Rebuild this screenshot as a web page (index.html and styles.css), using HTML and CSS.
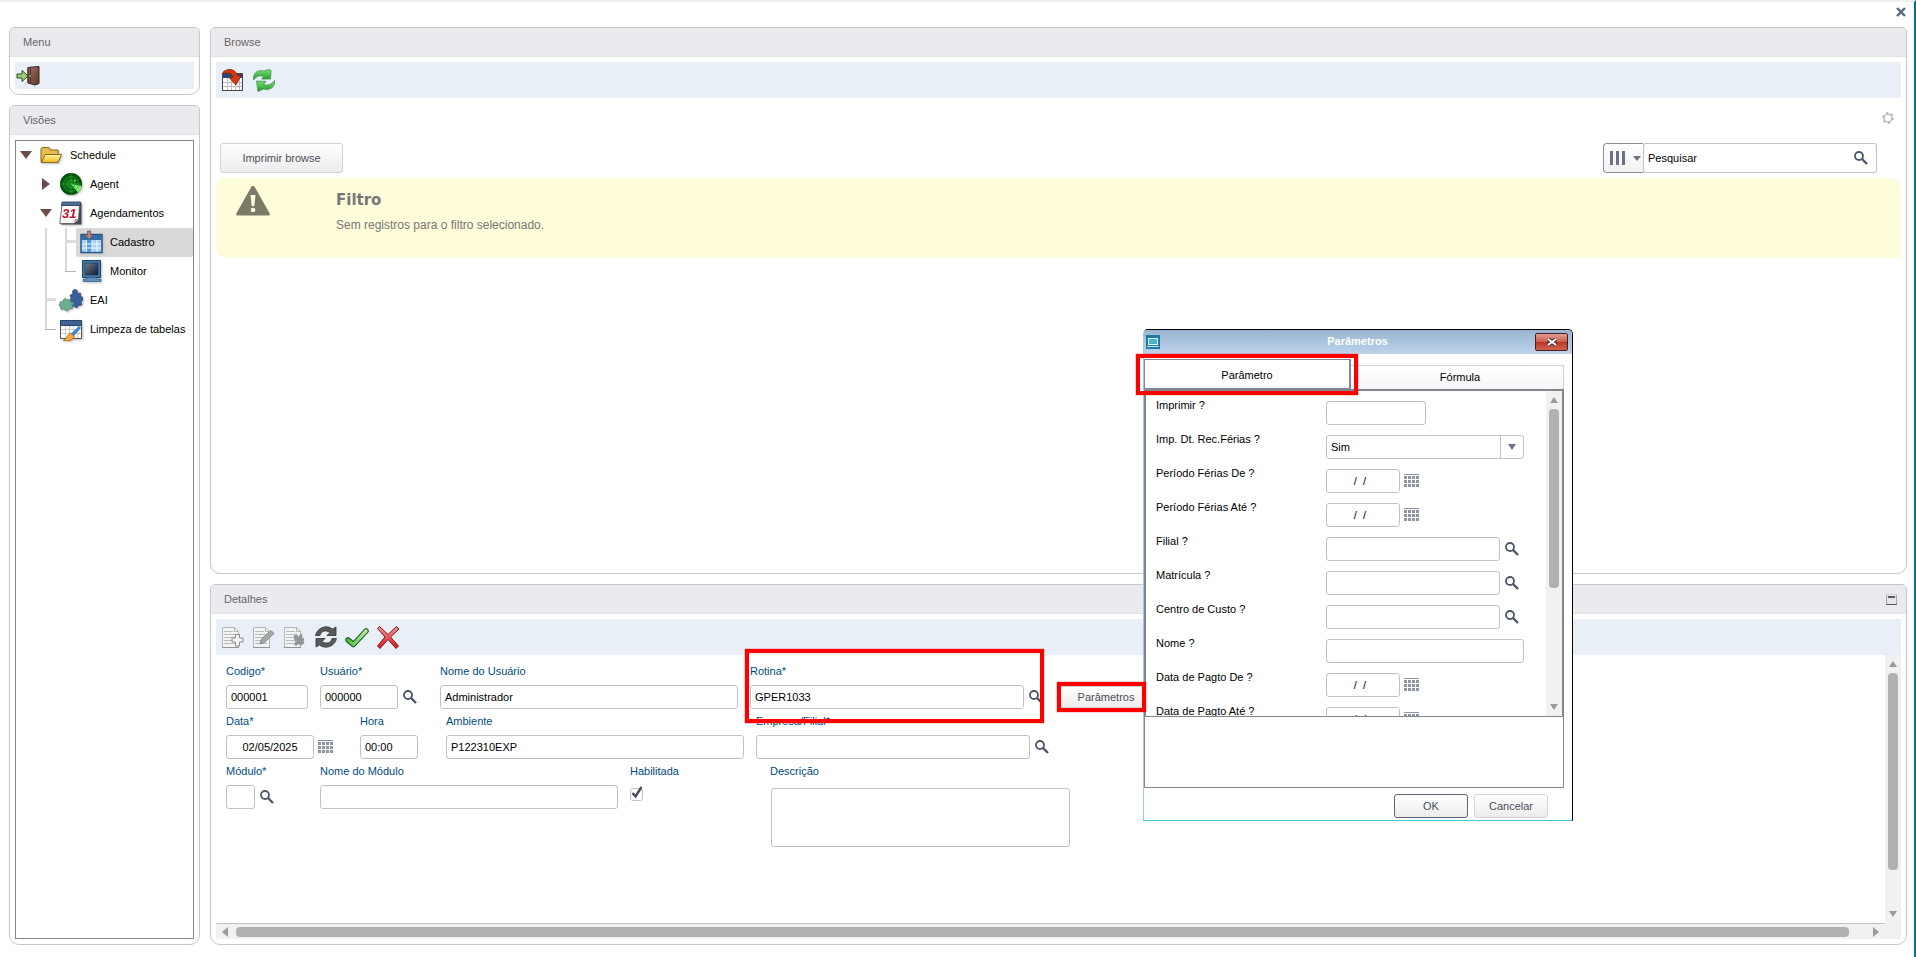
FILE: index.html
```html
<!DOCTYPE html>
<html lang="pt-BR">
<head>
  <meta charset="UTF-8">
  <title>Schedule</title>
  <link rel="stylesheet" href="styles.css">
</head>
<body>

  <!-- Ícones -->
  <svg class="sprite" width="0" height="0" aria-hidden="true">
    <defs>
      <linearGradient id="g-green" x1="0" y1="0" x2="0" y2="1"><stop offset="0" stop-color="#7ee07a"/><stop offset="1" stop-color="#14a01c"/></linearGradient>
      <linearGradient id="g-check" x1="0" y1="0" x2="1" y2="0"><stop offset="0" stop-color="#4cba38"/><stop offset="1" stop-color="#c2eaa4"/></linearGradient>
      <linearGradient id="g-red" x1="0" y1="0" x2="0" y2="1"><stop offset="0" stop-color="#ee9a94"/><stop offset="1" stop-color="#d4161e"/></linearGradient>
      <linearGradient id="g-door" x1="0" y1="0" x2="1" y2="1"><stop offset="0" stop-color="#a3705c"/><stop offset="1" stop-color="#5c382c"/></linearGradient>
      <linearGradient id="g-folder" x1="0" y1="0" x2="0" y2="1"><stop offset="0" stop-color="#fff7a0"/><stop offset="1" stop-color="#ecb91c"/></linearGradient>
      <linearGradient id="g-screen" x1="0" y1="0" x2="1" y2="1"><stop offset="0" stop-color="#6d8294"/><stop offset="1" stop-color="#0c1a2a"/></linearGradient>
      <radialGradient id="g-radar"><stop offset="0" stop-color="#0a8a14"/><stop offset="1" stop-color="#034a08"/></radialGradient>
    </defs>

    <symbol id="i-lens" viewBox="0 0 14 14">
      <circle cx="5" cy="5" r="4" fill="none" stroke="#4c566a" stroke-width="1.8"/>
      <path d="M8 8l5 5" stroke="#4c566a" stroke-width="2.4"/>
    </symbol>
    <symbol id="i-grid" viewBox="0 0 15 14">
      <path fill="#8e95a2" d="M0 0h15v1H0zM0 2h3v3H0zM4 2h3v3H4zM8 2h3v3H8zM12 2h3v3h-3zM0 6h3v3H0zM4 6h3v3H4zM8 6h3v3H8zM12 6h3v3h-3zM0 10h3v3H0zM4 10h3v3H4zM8 10h3v3H8zM12 10h3v3h-3z"/>
    </symbol>
    <symbol id="i-door" viewBox="0 0 24 24">
      <path d="M12 4.500l11-1v17l-4 1.500-7-2z" fill="url(#g-door)" stroke="#33231d"/>
      <path d="M12 4.500v15.500M14.500 4.500v15.500" stroke="#4b3128"/>
      <circle cx="14" cy="13" r="1.300" fill="#d8c8b8" stroke="#33231d" stroke-width=".6"/>
      <path d="M1 11h5V7.500l6 5.500-6 5.500V15H1z" fill="#9ccf7c" stroke="#2c4a20"/>
    </symbol>
    <symbol id="i-import" viewBox="0 0 24 24">
      <path d="M1.500 5.500h20v17h-20z" fill="#fff" stroke="#444"/>
      <path d="M2 6h19v4H2z" fill="#2c4a78"/>
      <path d="M2 14.500h19M2 18.500h19M6.500 10v12M10.500 10v12M14.500 10v12M18.500 10v12" stroke="#bbb"/>
      <path d="M1.500 5.500v17h20v-17" fill="none" stroke="#444"/>
      <path d="M2 4C6 .5 14 0 16.500 7.500h3.500L15 17 8.500 10l3.500-1C10.500 5 7 3.500 2 6z" fill="#d63a10" stroke="#8a1c08" stroke-width=".8"/>
    </symbol>
    <symbol id="i-recycle" viewBox="0 0 24 24">
      <path d="M1.500 12C1 5 5 1.500 12 3l5-1.500 2 1-.5 8.500H9.500L12 8.500C8 7 4.500 8 1.500 12z" fill="url(#g-green)" stroke="#4c8a50" stroke-width=".8"/>
      <path d="M22.500 12.500c.5 7-4.500 10-11 8.500L6 23.500 4.500 13l9.500.5-2.500 3c4 1.500 8 0 11-4z" fill="url(#g-green)" stroke="#4c8a50" stroke-width=".8"/>
    </symbol>
    <symbol id="i-folder" viewBox="0 0 24 24">
      <path d="M2 19V6l1-1.500h7L11.500 7H19v12z" fill="#e6bd4c" stroke="#8a6a24"/>
      <path d="M2.500 19.500L6 11.500h16.500l-3.500 8z" fill="url(#g-folder)" stroke="#8a6a24"/>
    </symbol>
    <symbol id="i-radar" viewBox="0 0 24 24">
      <circle cx="12" cy="12" r="11" fill="url(#g-radar)"/>
      <path d="M12 12L23 14a11 11 0 0 1-4 6.500z" fill="#7be870"/>
      <g fill="none" stroke="#35a53c" stroke-width=".6"><circle cx="12" cy="12" r="4"/><circle cx="12" cy="12" r="7.500"/><path d="M12 1v22M1 12h22"/></g>
      <circle cx="16" cy="8.500" r="1" fill="#5fe05c"/>
    </symbol>
    <symbol id="i-table" viewBox="0 0 24 24">
      <path d="M2 4.500h21v18H2z" fill="#a8d0f4" stroke="#24588c" stroke-width="1.500"/>
      <path d="M2.500 5h20v5h-20z" fill="#356ca6"/>
      <path d="M8 10h5v12H8z" fill="#4a97ee"/>
      <path d="M3 14h19M3 18h19M7.500 10v12M13 10v12M18 10v12" stroke="#eef7ff"/>
      <path d="M8.500 1h3v4H14l-4 4-4-4h2.500z" fill="#b68680" stroke="#80544e" stroke-width=".8"/>
    </symbol>
    <symbol id="i-monitor" viewBox="0 0 24 24">
      <path d="M3.500 1.500h18v17h-18z" fill="#4679a8" stroke="#1f4568"/>
      <path d="M6 4h13v12H6z" fill="url(#g-screen)" stroke="#163450" stroke-width=".6"/>
      <path d="M8 18.500h9V20h5v2.500H4V20h4z" fill="#5f90bc" stroke="#2c5478" stroke-width=".6"/>
    </symbol>
    <symbol id="i-puzzle" viewBox="0 0 24 24">
      <path d="M11 7l3-1c-1.500-3 .5-5 2.500-4.500S19 4 18.500 5.500l3-.5.5 4c3-1 3.500 4 0 4l1 4-4 .5c.5 3-3 3-3.500.5L12 19l-1-4-2-2 3-2z" fill="#395f96" stroke="#274672" stroke-width=".6"/>
      <path d="M1 14l3.500-1c-1-2.500 3-3.500 3-1l4-.5.5 3c3-1.500 3.500 2.500 1 3l.5 3-4 .5c0 2.500-3.500 2.500-3.500 0L2 21.500l-.5-3C-1 18.500-.5 15.500 1 16z" fill="#6cae8e" stroke="#3f7e62" stroke-width=".6"/>
    </symbol>
    <symbol id="i-broom" viewBox="0 0 24 24">
      <path d="M1.500 3.500h21v18h-21z" fill="#fff" stroke="#555"/>
      <path d="M1.500 3.500h21v5h-21z" fill="#3f6292" stroke="#2d4468"/>
      <path d="M2 12.500h20M2 16.500h20M6.500 9v12M10.500 9v12M14.500 9v12M18.500 9v12" stroke="#ccc"/>
      <path d="M20 9.500l1.500 1.200L14.500 19l-2.500-2z" fill="#3c8ae0" stroke="#285c9c" stroke-width=".6"/>
      <path d="M11.500 16l4 3.500c-2 4-6 5-11 4 3-1.500 4-6 7-7.500z" fill="#f4aa3c" stroke="#a06412" stroke-width=".8"/>
    </symbol>
    <symbol id="i-doc" viewBox="0 0 24 24">
      <path d="M1.500 2.500h12l4 4v16h-16z" fill="#f2f3f3" stroke="#b4b6b8"/>
      <path d="M13.500 2.500v4h4" fill="none" stroke="#b4b6b8"/>
      <path d="M3 6.500h9M3 9.500h12M3 12.500h12M3 15.500h12M3 18.500h12" stroke="#b9bbbd"/>
      <path d="M1 22.500h17" stroke="#8f9193"/>
    </symbol>
    <symbol id="i-add" viewBox="0 0 24 24">
      <use href="#i-doc"/>
      <path d="M14.500 9.500h4v3.500h3.500v4h-3.500v4h-4v-4H11v-4h3.500z" fill="#f0f1f1" stroke="#8c8e90"/>
    </symbol>
    <symbol id="i-edit" viewBox="0 0 24 24">
      <use href="#i-doc"/>
      <path d="M8 19l1.500-5L19 5.500l3 3L13 17z" fill="#a6a7a8" stroke="#858789"/>
    </symbol>
    <symbol id="i-remove" viewBox="0 0 24 24">
      <use href="#i-doc"/>
      <path d="M11 10.500l2-1 2.500 2 2-2.500 2 .5-.3 3 2.300 1.500-1 2 1 2.500-2.500 1-1.500 1.500-2-2-2.500 2-2-1.500 1.500-3-1.500-2.500z" fill="#929496"/>
    </symbol>
    <symbol id="i-refresh" viewBox="0 0 24 24">
      <path d="M1.500 10.500C3 3 12-1 18.500 4l3.500-2v8.500h-9L16 7.500C11.500 4.500 7 6 6 10.500z" fill="#5a5a5a" stroke="#333" stroke-width=".8"/>
      <path d="M22.500 13.500c-1.500 7.500-10.500 11.500-17 6.500L2 22v-8.500h9L8 16.500c4.500 3 9 1.500 10-3z" fill="#5a5a5a" stroke="#333" stroke-width=".8"/>
    </symbol>
    <symbol id="i-check" viewBox="0 0 24 24">
      <path d="M3 15l5.500 4.500L21 6" fill="none" stroke="#24622a" stroke-width="5.500" stroke-linecap="round" stroke-linejoin="round"/>
      <path d="M3 15l5.500 4.500L21 6" fill="none" stroke="url(#g-check)" stroke-width="3.300" stroke-linecap="round" stroke-linejoin="round"/>
    </symbol>
    <symbol id="i-cross" viewBox="0 0 24 24">
      <path d="M1.500 3.500l2-2 8.500 8 8.500-8 2.500 2.500-8.500 8 8 9-2.500 2.500-8-9-8 9L1.500 21 9 12z" fill="url(#g-red)" stroke="#8c1218" stroke-linejoin="round"/>
    </symbol>
    <symbol id="i-x" viewBox="0 0 10 10"><path d="M1 1l8 8M9 1L1 9" stroke="currentColor" stroke-width="2.400"/></symbol>
    <symbol id="i-up" viewBox="0 0 8 6"><path d="M0 6l4-6 4 6z" fill="currentColor"/></symbol>
    <symbol id="i-down" viewBox="0 0 8 6"><path d="M0 0h8L4 6z" fill="currentColor"/></symbol>
    <symbol id="i-left" viewBox="0 0 6 10"><path d="M6 0v10L0 5z" fill="currentColor"/></symbol>
    <symbol id="i-right" viewBox="0 0 6 10"><path d="M0 0v10l6-5z" fill="currentColor"/></symbol>
  </svg>

  <div class="page">
    <header class="topbar">
      <button class="icon-btn close-page" aria-label="Fechar"><svg width="10" height="10"><use href="#i-x"/></svg></button>
    </header>

    <div class="layout">
      <aside class="sidebar">
        <section class="panel">
          <h2 class="panel-title">Menu</h2>
          <div class="panel-body">
            <div class="toolbar toolbar-small">
              <button class="icon-btn" aria-label="Sair"><svg width="24" height="24"><use href="#i-door"/></svg></button>
            </div>
          </div>
        </section>

        <section class="panel panel-grow">
          <h2 class="panel-title">Visões</h2>
          <div class="panel-body">
            <ul class="tree">
              <li><button class="toggle" aria-label="Recolher"><svg width="12" height="8"><path d="M0 0h12L6 8z"/></svg></button>
                <a class="node" href="#"><svg width="24" height="24"><use href="#i-folder"/></svg>Schedule</a></li>
              <li><span class="cell"></span><button class="toggle" aria-label="Expandir"><svg width="8" height="12"><path d="M0 0v12l8-6z"/></svg></button>
                <a class="node" href="#"><svg width="24" height="24"><use href="#i-radar"/></svg>Agent</a></li>
              <li><span class="cell"></span><button class="toggle" aria-label="Recolher"><svg width="12" height="8"><path d="M0 0h12L6 8z"/></svg></button>
                <a class="node" href="#"><svg width="24" height="24" viewBox="0 0 24 24">
                  <path d="M3 2h19.500v21.500H2z" fill="#444b54"/>
                  <path d="M3 4.500h17.500l-1 14-4 4H.8z" fill="#fafafa" stroke="#555" stroke-width=".8"/>
                  <path d="M3 1h18.500v3.500H2.500z" fill="#49709a" stroke="#2e4258" stroke-width=".8"/>
                  <path d="M15.500 22.500l.8-4 3.200.2z" fill="#ccc" stroke="#555" stroke-width=".6"/>
                  <text x="3" y="17" class="date-glyph">31</text>
                </svg>Agendamentos</a></li>
              <li><span class="cell"></span><span class="cell line"></span><span class="cell tee"></span>
                <a class="node selected" href="#"><svg width="24" height="24"><use href="#i-table"/></svg>Cadastro</a></li>
              <li><span class="cell"></span><span class="cell line"></span><span class="cell corner"></span>
                <a class="node" href="#"><svg width="24" height="24"><use href="#i-monitor"/></svg>Monitor</a></li>
              <li><span class="cell"></span><span class="cell tee"></span>
                <a class="node" href="#"><svg width="24" height="24"><use href="#i-puzzle"/></svg>EAI</a></li>
              <li><span class="cell"></span><span class="cell corner"></span>
                <a class="node" href="#"><svg width="24" height="24"><use href="#i-broom"/></svg>Limpeza de tabelas</a></li>
            </ul>
          </div>
        </section>
      </aside>

      <main class="main">
        <section class="panel panel-grow">
          <h2 class="panel-title">Browse</h2>
          <div class="panel-body">
            <div class="toolbar">
              <button class="icon-btn" aria-label="Importar"><svg width="24" height="24"><use href="#i-import"/></svg></button>
              <button class="icon-btn" aria-label="Atualizar"><svg width="24" height="24"><use href="#i-recycle"/></svg></button>
            </div>
            <div class="settings-row">
              <button class="icon-btn" aria-label="Configurações">
                <svg width="12" height="12" viewBox="0 0 12 12"><circle cx="6" cy="6" r="4" fill="none" stroke="#bbb" stroke-width="1.500"/><circle cx="6" cy="6" r="5" fill="none" stroke="#bbb" stroke-width="2" stroke-dasharray="2.200 3.036"/></svg>
              </button>
            </div>
            <div class="browse-bar">
              <button class="btn btn-print">Imprimir browse</button>
              <div class="search">
                <button class="search-cols" aria-label="Colunas">
                  <svg width="16" height="14"><path d="M0 0h3v14H0zM6 0h3v14H6zM12 0h3v14h-3z" fill="#6a7284"/></svg>
                  <svg width="8" height="5"><path d="M0 0h8L4 5z" fill="#6a7284"/></svg>
                </button>
                <input type="text" value="Pesquisar" aria-label="Pesquisar">
                <button class="icon-btn search-go" aria-label="Buscar"><svg width="14" height="14"><use href="#i-lens"/></svg></button>
              </div>
            </div>
            <div class="notice">
              <svg width="34" height="30" viewBox="0 0 34 30">
                <path d="M17 0c1 0 1.500.6 2 1.400l14.500 25.800c.8 1.500 0 2.300-1.500 2.300H2c-1.500 0-2.300-.8-1.500-2.300L15 1.400C15.500.6 16 0 17 0z" fill="#7b7a69"/>
                <path d="M14.500 9h5l-1.200 11h-2.600z" fill="#fffcdb"/><circle cx="17" cy="24" r="2.300" fill="#fffcdb"/>
              </svg>
              <div>
                <h3>Filtro</h3>
                <p>Sem registros para o filtro selecionado.</p>
              </div>
            </div>
          </div>
        </section>

        <section class="panel panel-details">
          <h2 class="panel-title">Detalhes
            <button class="icon-btn" aria-label="Minimizar"><svg width="11" height="11"><path d="M0 0h11v11H0z" fill="#a4a7b0"/><path d="M0 0h11v1H0z" fill="#d4d5d9"/><path d="M0 10h11v1H0z" fill="#555a6c"/><path d="M1 1h9v9H1z" fill="#e6e6e6"/><path d="M2 2h7v2H2z" fill="#555a74"/></svg></button>
          </h2>
          <div class="panel-body">
            <div class="toolbar">
              <button class="icon-btn" aria-label="Incluir" disabled><svg width="24" height="24"><use href="#i-add"/></svg></button>
              <button class="icon-btn" aria-label="Alterar" disabled><svg width="24" height="24"><use href="#i-edit"/></svg></button>
              <button class="icon-btn" aria-label="Excluir" disabled><svg width="24" height="24"><use href="#i-remove"/></svg></button>
              <button class="icon-btn" aria-label="Atualizar"><svg width="24" height="24"><use href="#i-refresh"/></svg></button>
              <button class="icon-btn" aria-label="Confirmar"><svg width="24" height="24"><use href="#i-check"/></svg></button>
              <button class="icon-btn" aria-label="Cancelar"><svg width="24" height="24"><use href="#i-cross"/></svg></button>
            </div>

            <div class="scroll-area">
              <form class="details-form">
                <div class="form-row">
                  <div class="field"><label for="codigo">Codigo*</label>
                    <div class="control"><input type="text" id="codigo" class="w-code" value="000001"></div></div>
                  <div class="field"><label for="usuario">Usuário*</label>
                    <div class="control has-lens"><input type="text" id="usuario" class="w-user" value="000000"><button type="button" class="icon-btn" aria-label="Pesquisar usuário"><svg width="14" height="14"><use href="#i-lens"/></svg></button></div></div>
                  <div class="field"><label for="nomeUsuario">Nome do Usuário</label>
                    <div class="control"><input type="text" id="nomeUsuario" class="w-name" value="Administrador"></div></div>
                  <div class="field marked"><label for="rotina">Rotina*</label>
                    <div class="control has-lens"><input type="text" id="rotina" class="w-lookup" value="GPER1033"><button type="button" class="icon-btn" aria-label="Pesquisar rotina"><svg width="14" height="14"><use href="#i-lens"/></svg></button></div>
                    <span class="mark mark-field"></span></div>
                  <div class="field field-button">
                    <button type="button" class="btn btn-params">Parâmetros</button>
                    <span class="mark mark-button"></span></div>
                </div>

                <div class="form-row">
                  <div class="field"><label for="data">Data*</label>
                    <div class="control has-cal"><input type="text" id="data" class="w-date center" value="02/05/2025"><button type="button" class="icon-btn" aria-label="Calendário"><svg width="15" height="14"><use href="#i-grid"/></svg></button></div></div>
                  <div class="field field-hora"><label for="hora">Hora</label>
                    <div class="control"><input type="text" id="hora" class="w-hour" value="00:00"></div></div>
                  <div class="field"><label for="ambiente">Ambiente</label>
                    <div class="control"><input type="text" id="ambiente" class="w-name" value="P122310EXP"></div></div>
                  <div class="field"><label for="empresa">Empresa/Filial*</label>
                    <div class="control has-lens"><input type="text" id="empresa" class="w-lookup"><button type="button" class="icon-btn" aria-label="Pesquisar empresa"><svg width="14" height="14"><use href="#i-lens"/></svg></button></div></div>
                </div>

                <div class="form-row">
                  <div class="field field-code"><label for="modulo">Módulo*</label>
                    <div class="control has-lens"><input type="text" id="modulo" class="w-mod"><button type="button" class="icon-btn" aria-label="Pesquisar módulo"><svg width="14" height="14"><use href="#i-lens"/></svg></button></div></div>
                  <div class="field"><label for="nomeModulo">Nome do Módulo</label>
                    <div class="control"><input type="text" id="nomeModulo" class="w-name"></div></div>
                  <div class="field field-check"><label for="habilitada">Habilitada</label>
                    <div class="check"><input type="checkbox" id="habilitada" checked><svg width="13" height="14" viewBox="0 0 13 14"><path d="M2.500 7l3 3.500L11.500 1" fill="none" stroke="#434d60" stroke-width="2.400"/></svg></div></div>
                  <div class="field"><label for="descricao">Descrição</label>
                    <textarea id="descricao"></textarea></div>
                </div>
              </form>
              <div class="vbar" aria-hidden="true">
                <svg width="8" height="6"><use href="#i-up"/></svg>
                <div class="track"><div class="thumb" style="height: 85%"></div></div>
                <svg width="8" height="6"><use href="#i-down"/></svg>
              </div>
              <div class="hbar" aria-hidden="true">
                <svg width="6" height="10"><use href="#i-left"/></svg>
                <div class="track"><div class="thumb" style="width: 99%"></div></div>
                <svg width="6" height="10"><use href="#i-right"/></svg>
              </div>
              <div class="bar-corner"></div>
            </div>
          </div>
        </section>
      </main>
    </div>
  </div>

  <!-- Janela de parâmetros -->
  <div class="dialog" role="dialog" aria-labelledby="dialogTitle">
    <div class="dialog-title">
      <svg width="14" height="14"><path d="M0 0h14v14H0z" fill="#1d7ca4"/><path d="M2 3h10v7H2z" fill="#e8f8fc"/><path d="M3 4h8v5H3z" fill="#4ab4cc"/><path d="M1 11h12v1H1z" fill="#bfe8f2"/></svg>
      <h2 id="dialogTitle">Parâmetros</h2>
      <button class="dialog-close" aria-label="Fechar"><svg width="10" height="8" viewBox="0 0 10 8"><path d="M1 1l8 6M9 1L1 7" stroke="#4c2a2e" stroke-width="4"/><path d="M1 1l8 6M9 1L1 7" stroke="#fff" stroke-width="2"/></svg></button>
    </div>
    <div class="tabs">
      <button class="tab active">Parâmetro</button>
      <button class="tab">Fórmula</button>
      <span class="mark mark-tab"></span>
    </div>
    <div class="params">
      <form class="params-form">
        <div class="param"><label for="p1">Imprimir ?</label><input type="text" id="p1" class="w-print"></div>
        <div class="param"><label for="p2">Imp. Dt. Rec.Férias ?</label>
          <span class="combo"><select id="p2"><option>Sim</option><option>Não</option></select><span class="combo-arrow"><svg width="8" height="6"><use href="#i-down"/></svg></span></span></div>
        <div class="param has-cal"><label for="p3">Período Férias De ?</label><input type="text" id="p3" class="w-pdate center" value="  /  /    "><button type="button" class="icon-btn" aria-label="Calendário"><svg width="15" height="14"><use href="#i-grid"/></svg></button></div>
        <div class="param has-cal"><label for="p4">Período Férias Até ?</label><input type="text" id="p4" class="w-pdate center" value="  /  /    "><button type="button" class="icon-btn" aria-label="Calendário"><svg width="15" height="14"><use href="#i-grid"/></svg></button></div>
        <div class="param has-lens"><label for="p5">Filial ?</label><input type="text" id="p5" class="w-plookup"><button type="button" class="icon-btn" aria-label="Pesquisar"><svg width="14" height="14"><use href="#i-lens"/></svg></button></div>
        <div class="param has-lens"><label for="p6">Matrícula ?</label><input type="text" id="p6" class="w-plookup"><button type="button" class="icon-btn" aria-label="Pesquisar"><svg width="14" height="14"><use href="#i-lens"/></svg></button></div>
        <div class="param has-lens"><label for="p7">Centro de Custo ?</label><input type="text" id="p7" class="w-plookup"><button type="button" class="icon-btn" aria-label="Pesquisar"><svg width="14" height="14"><use href="#i-lens"/></svg></button></div>
        <div class="param"><label for="p8">Nome ?</label><input type="text" id="p8" class="w-pname"></div>
        <div class="param has-cal"><label for="p9">Data de Pagto De ?</label><input type="text" id="p9" class="w-pdate center" value="  /  /    "><button type="button" class="icon-btn" aria-label="Calendário"><svg width="15" height="14"><use href="#i-grid"/></svg></button></div>
        <div class="param has-cal"><label for="p10">Data de Pagto Até ?</label><input type="text" id="p10" class="w-pdate center" value="  /  /    "><button type="button" class="icon-btn" aria-label="Calendário"><svg width="15" height="14"><use href="#i-grid"/></svg></button></div>
      </form>
      <div class="vbar" aria-hidden="true">
        <svg width="8" height="6"><use href="#i-up"/></svg>
        <div class="track"><div class="thumb" style="height: 62%"></div></div>
        <svg width="8" height="6"><use href="#i-down"/></svg>
      </div>
    </div>
    <div class="help-box"></div>
    <div class="dialog-actions">
      <button class="btn btn-ok">OK</button>
      <button class="btn">Cancelar</button>
    </div>
  </div>

</body>
</html>
```
FILE: styles.css
```css
* {
  box-sizing: border-box;
}
body {
  margin: 0;
  font-family: "Liberation Sans", Arial, sans-serif;
  font-size: 11px;
  color: #000;
  background: #fff;
}
h2, h3, p, ul {
  margin: 0;
  padding: 0;
}
svg {
  display: block;
  flex: none;
}
button, input, select, textarea {
  font: inherit;
  color: inherit;
}
button {
  padding: 0;
}
.sprite {
  position: absolute;
}
.date-glyph {
  font: italic bold 13px "Liberation Sans", Arial, sans-serif;
  fill: #c8142c;
}

/* Página */
.page {
  display: flex;
  flex-direction: column;
  height: 100vh;
  border-top: 2px solid #f0f0f0;
  border-right: 2px solid #00718f;
}
.topbar {
  display: flex;
  justify-content: flex-end;
  align-items: flex-start;
  height: 25px;
  padding: 5px 8px;
}
.close-page {
  color: #5b6477;
}
.layout {
  display: flex;
  flex: 1;
  gap: 10px;
  min-height: 0;
  padding: 0 7px 12px 9px;
}
.sidebar {
  display: flex;
  flex-direction: column;
  flex: none;
  gap: 10px;
  width: 191px;
}
.main {
  display: flex;
  flex-direction: column;
  flex: 1;
  gap: 10px;
  min-width: 0;
}
.panel {
  display: flex;
  flex-direction: column;
  border: 1px solid #c5c7c8;
  border-radius: 5px 5px 10px 10px;
}
.panel-grow {
  flex: 1;
  min-height: 0;
}
.panel-details {
  flex: 0 0 361px;
}
.panel-title {
  display: flex;
  align-items: center;
  justify-content: space-between;
  height: 29px;
  padding: 0 9px 0 13px;
  font-size: 11px;
  font-weight: normal;
  color: #666;
  background: #ebeaef;
  border-bottom: 1px solid #e3e3e3;
  border-radius: 4px 4px 0 0;
}
.panel-body {
  display: flex;
  flex-direction: column;
  flex: 1;
  min-height: 0;
  padding: 5px;
}
.toolbar {
  display: flex;
  align-items: center;
  gap: 7px;
  height: 36px;
  padding: 0 5px;
  background: #e8eff7;
}
.toolbar-small {
  height: 27px;
  padding: 0 1px 1px;
}
.icon-btn {
  display: flex;
  align-items: center;
  justify-content: center;
  border: none;
  background: none;
}
.btn {
  height: 24px;
  width: 74px;
  color: #4b4f5a;
  border: 1px solid #d3d3d5;
  border-radius: 3px;
  background: linear-gradient(#fff, #ececec);
}

/* Árvore */
.tree {
  flex: 1;
  list-style: none;
  border: 1px solid #82868f;
}
.tree li {
  display: flex;
  height: 29px;
}
.cell, .toggle {
  flex: none;
  width: 20px;
}
.toggle {
  display: flex;
  align-items: center;
  justify-content: center;
  padding-bottom: 1px;
  border: none;
  background: none;
}
.toggle svg {
  fill: #6b4c48;
}
.line {
  background: linear-gradient(#dcd8d5, #dcd8d5) 9px 0 / 2px 100% no-repeat;
}
.tee {
  background:
    linear-gradient(#dcd8d5, #dcd8d5) 9px 0 / 2px 100% no-repeat,
    linear-gradient(#dfdbd9, #dfdbd9) 9px 12px / 11px 3px no-repeat;
}
.corner {
  background:
    linear-gradient(#dcd8d5, #dcd8d5) 9px 0 / 2px 14px no-repeat,
    linear-gradient(#b9b4b1, #b9b4b1) 9px 14px / 11px 1px no-repeat;
}
.node {
  display: flex;
  align-items: center;
  flex: 1;
  gap: 7px;
  padding: 0 0 2px 3px;
  color: #000;
  text-decoration: none;
  white-space: nowrap;
}
.node svg {
  filter: drop-shadow(1px 1px 1px #bbb);
}
.node.selected {
  background: #d9d9d9;
  border-radius: 2px;
}

/* Browse */
.settings-row {
  display: flex;
  justify-content: flex-end;
  align-items: flex-start;
  height: 45px;
  padding: 14px 7px 0;
}
.browse-bar {
  display: flex;
  justify-content: space-between;
  padding: 0 24px 5px 4px;
}
.btn-print {
  width: 123px;
  height: 30px;
}
.search {
  display: flex;
  width: 274px;
  height: 30px;
}
.search-cols {
  display: flex;
  align-items: center;
  gap: 7px;
  width: 40px;
  padding-left: 6px;
  border: 1px solid #8d9096;
  border-right: none;
  border-radius: 4px 0 0 4px;
  background: linear-gradient(#fff, #f2f2f2);
}
.search input[type="text"] {
  flex: 1;
  min-width: 0;
  height: 30px;
  border-right: none;
  border-radius: 3px 0 0 3px;
}
.search-go {
  width: 31px;
  border: 1px solid #bfc1c2;
  border-left: none;
  border-radius: 0 3px 3px 0;
}
.notice {
  display: flex;
  gap: 66px;
  height: 80px;
  padding: 8px 20px;
  color: #777;
  background: #fffcdb;
  border-radius: 10px 10px 0 10px;
}
.notice h3 {
  margin: 5px 0 8px;
  font: bold 15px/18px "DejaVu Sans", sans-serif;
}
.notice p {
  font-size: 12px;
  line-height: 16px;
}

/* Campos */
input[type="text"], textarea, select {
  height: 24px;
  padding: 0 4px;
  border: 1px solid #bfc1c2;
  border-radius: 3px;
  background: #fff;
}
input.center {
  text-align: center;
}
.w-code { width: 82px; }
.w-user { width: 78px; }
.w-name { width: 298px; }
.w-lookup { width: 274px; }
.w-date { width: 88px; }
.w-hour { width: 58px; }
.w-mod { width: 29px; }
.w-print { width: 100px; }
.w-pdate { width: 74px; }
.w-plookup { width: 174px; }
.w-pname { width: 198px; }

.scroll-area {
  display: grid;
  grid-template: 1fr 16px / 1fr 16px;
  flex: 1;
}
.details-form {
  padding: 8px 10px;
}
.form-row {
  display: flex;
  gap: 12px;
  height: 50px;
}
.field label {
  display: block;
  height: 22px;
  line-height: 16px;
  color: #004a80;
}
.control {
  display: flex;
}
.has-lens .icon-btn {
  width: 30px;
  height: 24px;
  padding-left: 5px;
  justify-content: flex-start;
}
.has-cal .icon-btn {
  width: 34px;
  height: 24px;
  padding-left: 4px;
  justify-content: flex-start;
}
.field-hora {
  width: 74px;
}
.field-code {
  width: 82px;
}
.field-check {
  width: 128px;
}
.field-button {
  position: relative;
  margin-left: -8px;
  padding-top: 23px;
}
.btn-params {
  width: 96px;
  height: 22px;
}
.check {
  position: relative;
  padding-top: 3px;
}
.check input {
  display: block;
  width: 13px;
  height: 13px;
  margin: 0;
  appearance: none;
  border: 1px solid #bfc1c2;
  border-radius: 3px;
}
.check svg {
  position: absolute;
  left: 0;
  top: 1px;
  pointer-events: none;
}
textarea {
  display: block;
  width: 299px;
}
.field textarea {
  height: 59px;
  margin: 3px 0 0 1px;
  resize: none;
}

/* Barras de rolagem */
.vbar, .hbar {
  display: flex;
  align-items: center;
  color: #9b9b9b;
  background: #f1f1f1;
}
.vbar {
  flex-direction: column;
  gap: 6px;
  width: 16px;
  padding: 6px 0;
}
.hbar {
  gap: 8px;
  padding: 1px 6px 0;
  border-top: 1px solid #bfc1c2;
}
.bar-corner {
  background: #f0f0f0;
}
.track {
  flex: 1;
}
.thumb {
  background: #b1b1b1;
  border-radius: 4px;
}
.vbar .thumb {
  width: 10px;
}
.hbar .thumb {
  height: 10px;
}

/* Destaques em vermelho */
.mark {
  position: absolute;
  z-index: 20;
  border: 4px solid #f00;
  box-shadow: 0 0 1px #f00;
  pointer-events: none;
}
.marked {
  position: relative;
}
.mark-field {
  inset: -14px 10px -10px -5px;
}
.mark-button {
  inset: 19px 8px 1px -1px;
}
.mark-tab {
  inset: 0 206px -6px -8px;
}

/* Janela */
.dialog {
  position: absolute;
  left: 1143px;
  top: 329px;
  z-index: 10;
  width: 430px;
  background: #fff;
  border: 1px solid #000;
  border-left-color: #a9c4de;
  border-bottom-color: #35cbe0;
  border-radius: 5px 5px 0 0;
}
.dialog-title {
  display: flex;
  align-items: center;
  height: 24px;
  padding: 0 4px 0 2px;
  color: #fff;
  background: linear-gradient(#99b4d1, #bdd3ea);
  border-radius: 4px 4px 0 0;
}
.dialog-title h2 {
  flex: 1;
  padding: 0 0 2px 20px;
  font-size: 11px;
  text-align: center;
}
.dialog-close {
  display: flex;
  align-items: center;
  justify-content: center;
  width: 33px;
  height: 18px;
  border: 1px solid #4a1a20;
  border-radius: 2px;
  background: linear-gradient(#e0a094, #cc5c48 50%, #b83420 50%, #cf6450);
}
.tabs {
  position: relative;
  display: flex;
  align-items: flex-end;
  height: 35px;
  margin-right: 8px;
}
.tab {
  flex: 1;
  height: 24px;
  padding: 0 0 2px 6px;
  border: 1px solid #d0d0d0;
  border-width: 1px 1px 0 0;
  background: linear-gradient(#fff, #f6f6f6);
}
.tab.active {
  flex: 0 0 207px;
  height: 30px;
  padding: 2px 0 0;
  border: 1px solid #82868f;
  border-right-width: 2px;
  background: #fff;
}
.params {
  display: flex;
  height: 327px;
  margin-right: 8px;
  overflow: hidden;
  border: 2px solid #82868f;
  border-bottom: none;
}
.params-form {
  flex: 1;
  padding: 10px;
}
.param {
  display: flex;
  height: 34px;
}
.param label {
  width: 170px;
  height: 8px;
  line-height: 8px;
}
.combo {
  position: relative;
  height: 24px;
}
.combo select {
  width: 198px;
  appearance: none;
}
.combo-arrow {
  position: absolute;
  top: 1px;
  right: 1px;
  display: flex;
  align-items: center;
  justify-content: center;
  width: 23px;
  height: 22px;
  color: #6a7284;
  border-left: 1px solid #bfc1c2;
  pointer-events: none;
}
.help-box {
  height: 72px;
  margin-right: 8px;
  border: 1px solid #82868f;
}
.dialog-actions {
  display: flex;
  justify-content: flex-end;
  gap: 6px;
  padding: 6px 24px 2px;
}
.btn-ok {
  border-color: #5b6477;
}
```
